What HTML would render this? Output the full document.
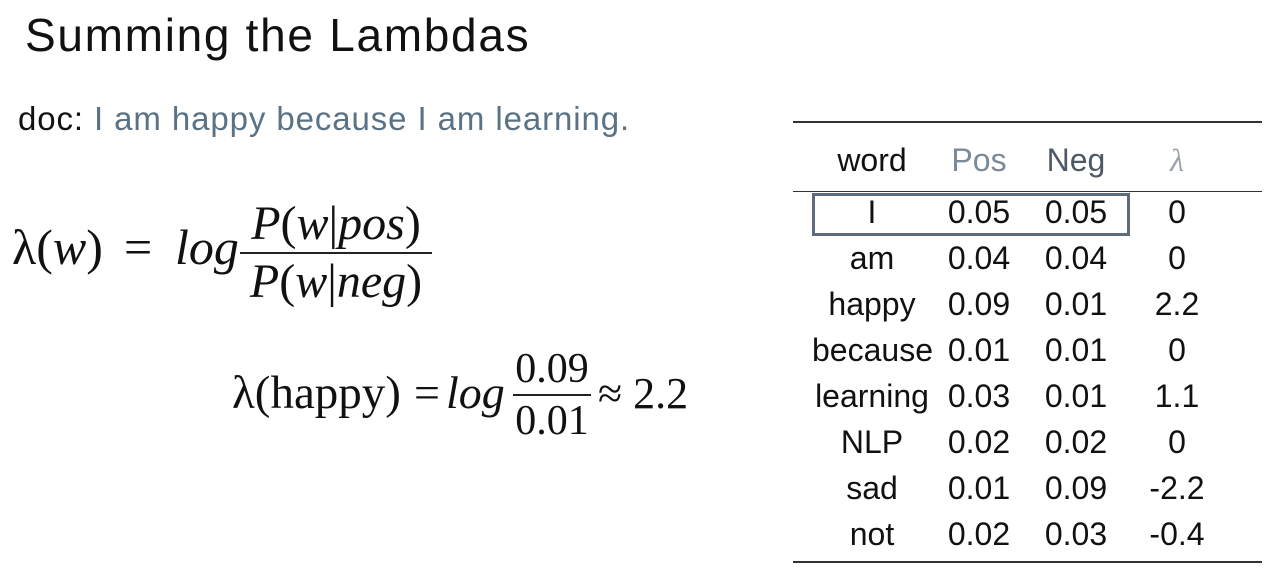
<!DOCTYPE html>
<html><head><meta charset="utf-8"><style>
body{margin:0;width:1274px;height:580px;background:#fff;position:relative;overflow:hidden;font-family:"Liberation Sans",sans-serif;color:#111}
.a{position:absolute;white-space:nowrap}
.m{font-family:"Liberation Serif",serif}
.i{font-style:italic}
.c{position:absolute;text-align:center;font-size:32px;line-height:46px}
.hr{position:absolute;left:793px;width:469px;height:2px;background:#333}
</style></head><body>
<div class="a" style="left:25px;top:8px;font-size:46px;letter-spacing:1.7px;color:#111">Summing the Lambdas</div>
<div class="a" style="left:18px;top:100px;font-size:33px;letter-spacing:0.9px">doc: <span style="color:#5a7285">I am happy because I am learning.</span></div>

<div class="a m" style="left:12px;top:218px;font-size:50px">λ(<span class="i">w</span>)</div>
<div class="a m" style="left:124px;top:218px;font-size:50px">=</div>
<div class="a m i" style="left:175px;top:218px;font-size:50px">log</div>
<div class="a m" style="left:240px;top:196px;width:192px;text-align:center;font-size:48px;line-height:56px">
<div><span class="i">P</span>(<span class="i">w</span>|<span class="i">pos</span>)</div>
<div style="border-top:2px solid #222"><span class="i">P</span>(<span class="i">w</span>|<span class="i">neg</span>)</div></div>

<div class="a m" style="left:232px;top:366px;font-size:47px">λ(happy)</div>
<div class="a m" style="left:414px;top:366px;font-size:46px">=</div>
<div class="a m i" style="left:446px;top:366px;font-size:46px">log</div>
<div class="a m" style="left:513px;top:344px;width:78px;text-align:center;font-size:42px;line-height:50px">
<div>0.09</div><div style="border-top:2px solid #222">0.01</div></div>
<div class="a m" style="left:598px;top:368px;font-size:44px">≈ 2.2</div>

<div class="hr" style="top:121px"></div>
<div class="hr" style="top:191px;height:1px"></div>
<div class="hr" style="top:561px"></div>
<div class="a" style="left:812px;top:193px;width:312px;height:37px;border:3px solid #5c6c7a"></div>

<div class="c" style="left:812px;width:120px;top:137px">word</div>
<div class="c" style="left:935px;width:88px;top:137px;color:#7a8a98">Pos</div>
<div class="c" style="left:1032px;width:88px;top:137px;color:#4d5a66">Neg</div>
<div class="c m i" style="left:1140px;width:74px;top:137px;color:#9aa3ac">λ</div>

<div style="position:absolute;left:0;top:189px">
<div class="c" style="left:812px;width:120px;top:0">I<br>am<br>happy<br>because<br>learning<br>NLP<br>sad<br>not</div>
<div class="c" style="left:935px;width:88px;top:0">0.05<br>0.04<br>0.09<br>0.01<br>0.03<br>0.02<br>0.01<br>0.02</div>
<div class="c" style="left:1032px;width:88px;top:0">0.05<br>0.04<br>0.01<br>0.01<br>0.01<br>0.02<br>0.09<br>0.03</div>
<div class="c" style="left:1140px;width:74px;top:0">0<br>0<br>2.2<br>0<br>1.1<br>0<br>-2.2<br>-0.4</div>
</div>
</body></html>
